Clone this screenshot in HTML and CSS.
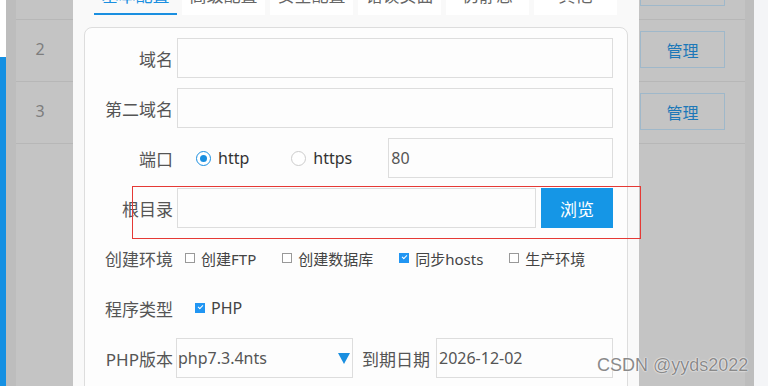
FILE: index.html
```html
<!DOCTYPE html>
<html lang="zh-CN">
<head>
    <meta charset="UTF-8">
    <meta name="viewport" content="width=device-width, initial-scale=1.0">
    <title>站点配置</title>
    <link rel="stylesheet" href="styles.css">
</head>
<body>
    <div class="edge-left"></div>

    <div class="stage">
        <div class="strip"></div>
        <div class="table">
            <div class="row">
                <div class="num">1</div>
                <button class="manage">管理</button>
            </div>
            <div class="row">
                <div class="num">2</div>
                <button class="manage">管理</button>
            </div>
            <div class="row">
                <div class="num">3</div>
                <button class="manage">管理</button>
            </div>
        </div>
        <div class="strip strip-r"></div>

        <div class="modal">
            <div class="tabs">
                <div class="tab active">基本配置</div>
                <div class="tab">高级配置</div>
                <div class="tab">安全配置</div>
                <div class="tab">错误页面</div>
                <div class="tab">伪静态</div>
                <div class="tab">其他</div>
            </div>

            <div class="card">
                <div class="field">
                    <span class="lbl">域名</span>
                    <input class="txt" type="text">
                </div>
                <div class="field">
                    <span class="lbl">第二域名</span>
                    <input class="txt" type="text">
                </div>
                <div class="field">
                    <span class="lbl">端口</span>
                    <label class="radio on"><i></i>http</label>
                    <label class="radio"><i></i>https</label>
                    <input class="txt" type="text" value="80">
                </div>
                <div class="field">
                    <span class="lbl">根目录</span>
                    <input class="txt" type="text">
                    <button class="browse">浏览</button>
                </div>
                <div class="field env">
                    <span class="lbl">创建环境</span>
                    <label class="chk"><i></i>创建FTP</label>
                    <label class="chk"><i></i>创建数据库</label>
                    <label class="chk on"><i></i>同步hosts</label>
                    <label class="chk"><i></i>生产环境</label>
                </div>
                <div class="field prog">
                    <span class="lbl">程序类型</span>
                    <label class="chk on"><i></i>PHP</label>
                </div>
                <div class="field">
                    <span class="lbl">PHP版本</span>
                    <div class="select">php7.3.4nts<b></b></div>
                    <span class="lbl2">到期日期</span>
                    <input class="txt" type="text" value="2026-12-02">
                </div>
            </div>
        </div>

        <div class="mark"></div>
        <div class="watermark">CSDN @yyds2022</div>
    </div>

    <div class="edge-right"></div>
</body>
</html>
```

FILE: styles.css
```css
* {
    box-sizing: border-box;
}

body {
    margin: 0;
    height: 386px;
    overflow: hidden;
    display: flex;
    font-family: "Noto Sans", "Noto Sans CJK SC", sans-serif;
    color: #555;
}

.edge-left {
    width: 6px;
    background: linear-gradient(#fff 0 57px, #1590e2 57px);
}

.edge-right {
    width: 14px;
    background: #f4f5f7;
}

.stage {
    flex: 1;
    position: relative;
    display: flex;
    background: #c4c4c4;
}

.strip {
    width: 10px;
    background: #bdbdbd;
}

.strip-r {
    width: 9px;
}

.table {
    flex: 1;
    margin-top: -42px;
}

.table .row {
    height: 62px;
    display: flex;
    align-items: flex-start;
    justify-content: space-between;
    padding: 11px 20px 0 0;
    border-bottom: 1px solid #b7b7b7;
}

.num {
    width: 48px;
    text-align: center;
    line-height: 37px;
    font-size: 16px;
    color: #7d7d7d;
}

.manage {
    width: 85px;
    height: 37px;
    background: transparent;
    border: 1px solid #9fb8ca;
    color: #1c78b8;
    font-family: inherit;
    font-size: 16px;
}

/* modal */
.modal {
    position: absolute;
    left: 67px;
    top: -21px;
    width: 566px;
    height: 430px;
    background: #f9f9f9;
    padding: 0 11px;
}

.tabs {
    display: flex;
    gap: 5px;
    padding-left: 10px;
}

.tab {
    width: 83px;
    height: 36px;
    line-height: 34px;
    text-align: center;
    background: #fff;
    font-size: 17px;
    color: #666;
    border-bottom: 2px solid transparent;
}

.tab.active {
    color: #1a8fe0;
    border-bottom-color: #1a8fe0;
    background: transparent;
}

.card {
    margin-top: 12px;
    height: 400px;
    background: #fdfdfd;
    border: 1px solid #ddd;
    border-radius: 8px;
    padding: 10px 14px 0 0;
}

.field {
    height: 40px;
    margin-bottom: 10px;
    display: flex;
    align-items: center;
    gap: 5px;
}

.lbl {
    width: 88px;
    flex: none;
    text-align: right;
    font-size: 17px;
    margin-right: -1px;
}

.lbl2 {
    font-size: 17px;
    margin: 0 1px 0 4px;
}

.txt {
    flex: 1;
    min-width: 0;
    height: 40px;
    border: 1px solid #ddd;
    background: #fdfdfd;
    padding: 0 2px;
    font-family: inherit;
    font-size: 16px;
    color: #555;
}

.browse {
    width: 72px;
    height: 40px;
    border: none;
    background: #1596e6;
    color: #fff;
    font-family: inherit;
    font-size: 17px;
}

.radio {
    display: flex;
    align-items: center;
    gap: 7px;
    font-size: 16px;
    color: #333;
    margin-left: 19px;
    margin-right: 37px;
}

.radio i {
    width: 15px;
    height: 15px;
    border-radius: 50%;
    border: 1px solid #ccc;
    background: #fff;
    display: flex;
    align-items: center;
    justify-content: center;
}

.radio.on i {
    border-color: #1a8fe0;
}

.radio.on i::after {
    content: "";
    width: 7px;
    height: 7px;
    border-radius: 50%;
    background: #1a8fe0;
}

.radio + .radio {
    margin-left: 0;
    margin-right: 31px;
}

.env {
    gap: 0;
}

.env .lbl {
    margin-right: 12px;
}

.chk {
    display: flex;
    align-items: center;
    gap: 6px;
    font-size: 15px;
    color: #444;
    margin-right: 26px;
}

.chk i {
    width: 10px;
    height: 10px;
    border: 1px solid #999;
    background: #fff;
    position: relative;
}

.chk.on i {
    border-color: #2196f3;
    background: #2196f3;
}

.chk.on i::after {
    content: "";
    position: absolute;
    left: 2px;
    top: 1px;
    width: 4px;
    height: 2px;
    border-left: 1.5px solid #fff;
    border-bottom: 1.5px solid #fff;
    transform: rotate(-45deg);
}

.prog .chk {
    margin-left: 18px;
    font-size: 16px;
}

.select {
    width: 177px;
    height: 40px;
    flex: none;
    border: 1px solid #ddd;
    background: #fdfdfd;
    display: flex;
    align-items: center;
    justify-content: space-between;
    padding: 0 2px 0 1px;
    font-size: 16px;
    margin-left: -1px;
}

.select b {
    border-left: 6px solid transparent;
    border-right: 6px solid transparent;
    border-top: 11px solid #1a8fe0;
}

.mark {
    position: absolute;
    left: 126px;
    top: 186px;
    width: 509px;
    height: 53px;
    border: 1px solid #e53935;
}

.watermark {
    position: absolute;
    left: 591px;
    top: 355px;
    font-family: "Liberation Sans", sans-serif;
    font-size: 18px;
    color: #8a8a8a;
    text-shadow: 0 0 2px #fff, 0 0 1px #fff;
}
```
